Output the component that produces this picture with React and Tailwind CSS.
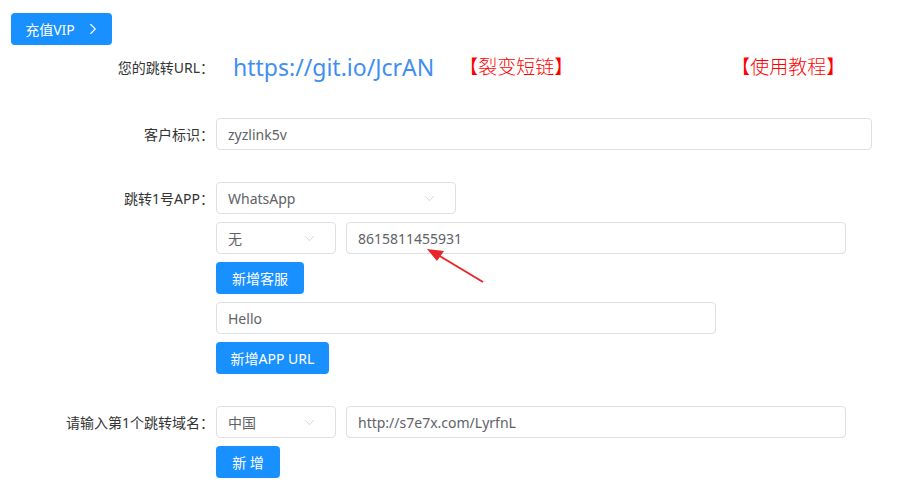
import { ChevronRight, ChevronDown } from 'lucide-react'

const FONT = { fontFamily: '"Noto Sans", "Noto Sans CJK SC", sans-serif' }

const BOX = "h-[32px] border border-[#dcdfe6] rounded-[4px] bg-white flex items-center px-[11px] text-[14px] text-[#606266]"
const BTN = "h-[32px] rounded-[4px] bg-[#1890ff] text-white text-[14px] flex items-center justify-center"

function Row({ label, children, className = '' }) {
  return (
    <div className={"flex " + className}>
      <div className="w-[216px] shrink-0 h-[32px] flex items-center justify-end pr-[2px] text-[14px] text-[#333]">{label}</div>
      <div className="flex flex-col gap-[8px]">{children}</div>
    </div>
  )
}

function Select({ value, width }) {
  return (
    <div className={BOX + " justify-between " + width}>
      <span>{value}</span>
      <ChevronDown className="w-[17px] h-[17px] text-[#c0c4cc] mr-[6px]" strokeWidth={1} />
    </div>
  )
}

export default function App() {
  return (
    <div className="relative w-[908px] h-[497px] bg-white overflow-hidden" style={FONT}>
      <div className="pt-[13px] pl-[11px]">
        <button className={BTN + " w-[101px] gap-[9px] pl-[4px]"}>
          <span>充值VIP</span>
          <ChevronRight className="w-[18px] h-[18px]" strokeWidth={1.5} />
        </button>
      </div>

      <Row label="您的跳转URL：" className="mt-[6px] items-center">
        <div className="flex items-center h-[32px]">
          <a className="ml-[17px] text-[23px] text-[#3f8ef2] leading-none">https://git.io/JcrAN</a>
          <span className="ml-[25px] text-[19px] font-light text-[#ff0000]">【裂变短链】</span>
          <span className="ml-[158px] text-[19px] font-light text-[#ff0000]">【使用教程】</span>
        </div>
      </Row>

      <Row label="客户标识：" className="mt-[35px]">
        <div className={BOX + " w-[656px]"}>zyzlink5v</div>
      </Row>

      <Row label="跳转1号APP：" className="mt-[32px]">
        <Select value="WhatsApp" width="w-[240px]" />
        <div className="flex gap-[10px]">
          <Select value="无" width="w-[120px]" />
          <div className={BOX + " w-[500px]"}>8615811455931</div>
        </div>
        <button className={BTN + " w-[88px]"}>新增客服</button>
        <div className={BOX + " w-[500px]"}>Hello</div>
        <button className={BTN + " w-[113px]"}>新增APP URL</button>
      </Row>

      <Row label="请输入第1个跳转域名：" className="mt-[32px]">
        <div className="flex gap-[10px]">
          <Select value="中国" width="w-[120px]" />
          <div className={BOX + " w-[500px]"}>http://s7e7x.com/LyrfnL</div>
        </div>
        <button className={BTN + " w-[64px]"}>新 增</button>
      </Row>

      <svg className="absolute left-0 top-0 pointer-events-none" width="908" height="497">
        <line x1="483" y1="282" x2="438" y2="255" stroke="#e8262a" strokeWidth="2" />
        <polygon points="427,249 444,251 437,261" fill="#e8262a" />
      </svg>
    </div>
  )
}
